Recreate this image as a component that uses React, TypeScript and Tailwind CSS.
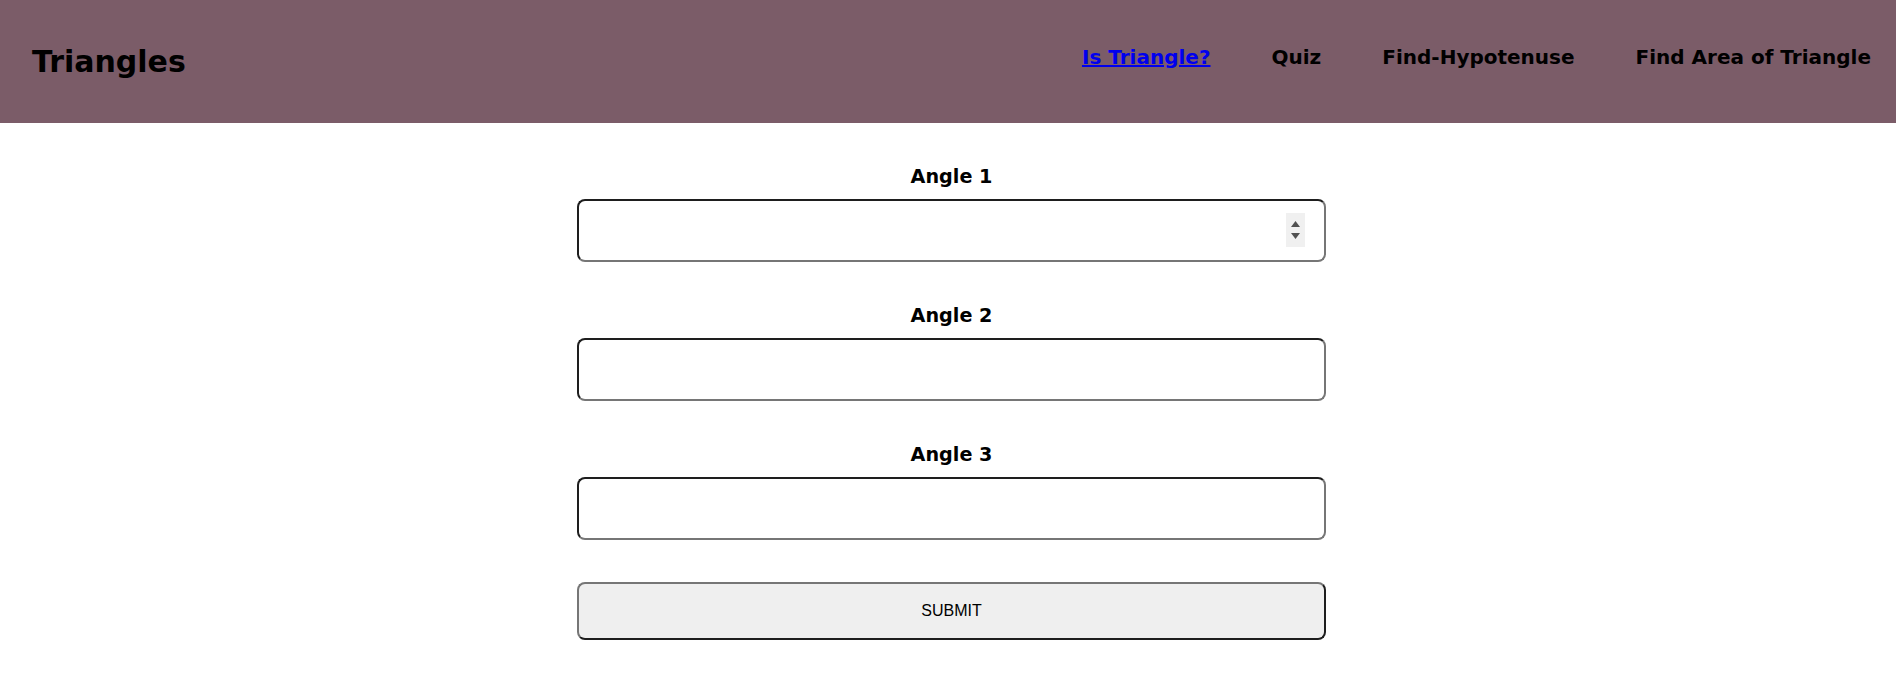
const links = [
  { label: 'Is Triangle?', active: true },
  { label: 'Quiz', active: false },
  { label: 'Find-Hypotenuse', active: false },
  { label: 'Find Area of Triangle', active: false },
];

const angles = ['Angle 1', 'Angle 2', 'Angle 3'];

const App = () => {
  return (
    <div className="min-h-screen bg-white font-['DejaVu_Sans',sans-serif] text-black">
      {/* Header */}
      <header className="flex h-[123px] items-center justify-between bg-[#7b5c68] pl-[32px] pr-[25px]">
        <h1 className="text-[30px] font-bold leading-none">Triangles</h1>
        <nav className="flex gap-[61px] pb-[9px]">
          {links.map((link) => (
            <a
              key={link.label}
              href="#"
              className={
                link.active
                  ? 'text-[20px] font-bold text-[#0000ee] underline'
                  : 'text-[20px] font-bold text-black no-underline'
              }
            >
              {link.label}
            </a>
          ))}
        </nav>
      </header>

      {/* Form */}
      <div className="flex justify-center pl-[7px] pt-[42px]">
        <form className="flex w-[749px] flex-col" onSubmit={(e) => e.preventDefault()}>
          {angles.map((angle, i) => (
            <div key={angle} className="mb-[42px] flex flex-col items-center">
              <label className="text-[19.2px] font-bold leading-[23px]">{angle}</label>
              <div className="relative mt-[11px] w-full">
                <input
                  type="text"
                  className="h-[63px] w-full rounded-[8px] border-2 border-t-[#1e1e1e] border-l-[#1e1e1e] border-r-[#767676] border-b-[#767676] bg-white px-3 outline-none"
                />
                {i === 0 && (
                  <div className="absolute right-[21px] top-[14px] flex h-[34px] w-[19px] flex-col items-center justify-center gap-[6px] bg-[#f0f0f0]">
                    <svg width="9" height="6" viewBox="0 0 9 6">
                      <path d="M4.5 0 L9 6 L0 6 Z" fill="#505050" />
                    </svg>
                    <svg width="9" height="6" viewBox="0 0 9 6">
                      <path d="M0 0 L9 0 L4.5 6 Z" fill="#505050" />
                    </svg>
                  </div>
                )}
              </div>
            </div>
          ))}
          <button
            type="submit"
            className="h-[58px] w-full rounded-[8px] border-2 border-t-[#767676] border-l-[#767676] border-r-[#1e1e1e] border-b-[#1e1e1e] bg-[#efefef] font-['Liberation_Sans',Arial,sans-serif] text-[16px]"
          >
            SUBMIT
          </button>
        </form>
      </div>
    </div>
  );
};

export default App;
